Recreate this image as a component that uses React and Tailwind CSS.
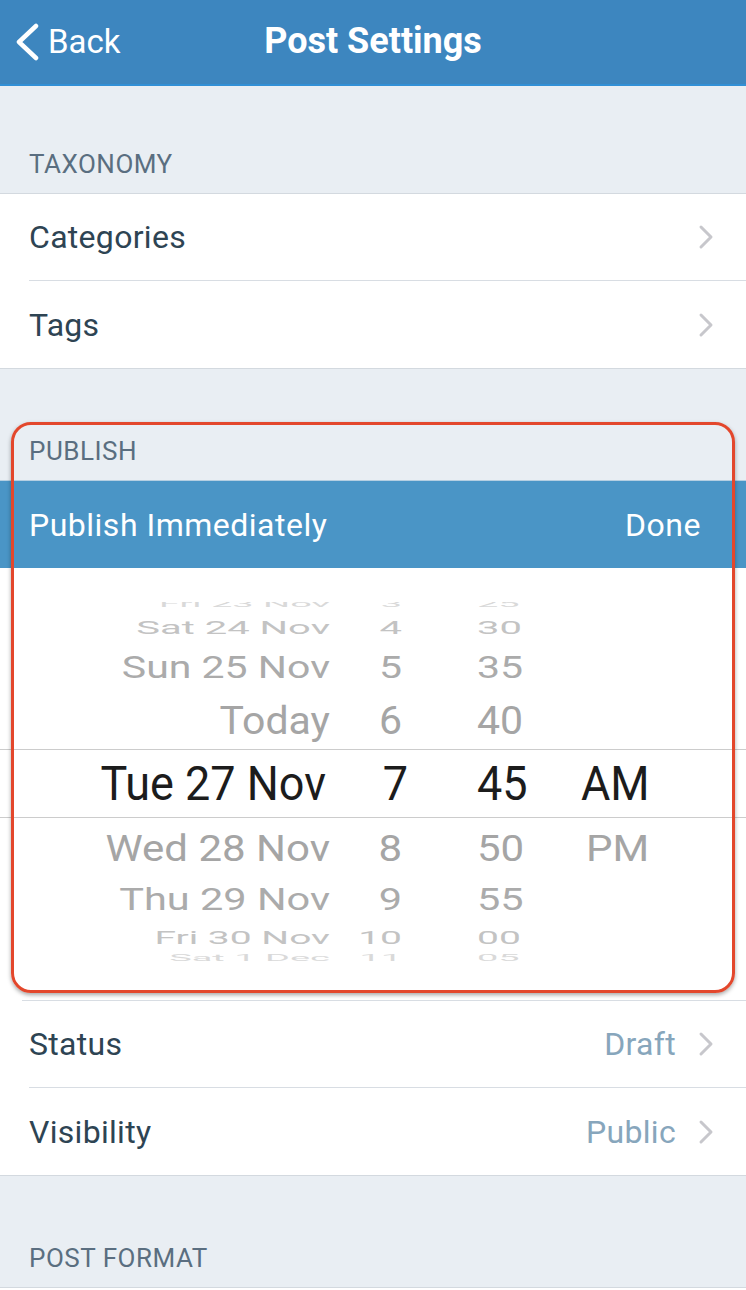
import React from "react";

const Chevron = () => (
  <svg width="16" height="26" viewBox="0 0 16 26" className="shrink-0">
    <polyline points="3,3 13,13 3,23" fill="none" stroke="#c7c7cc" strokeWidth="3" strokeLinecap="round" strokeLinejoin="round" />
  </svg>
);

const Row = ({ label, value, border = true }) => (
  <div className="flex h-[87px] items-center bg-white pl-[29px]">
    <div className={`flex h-full flex-1 items-center pr-[32px] ${border ? "border-b border-[#d8dde3]" : ""}`}>
      <span className="flex-1 text-[32px] tracking-[0.3px] text-[#2e4453]">{label}</span>
      {value && <span className="mr-[22px] text-[32px] tracking-[0.3px] text-[#87a6bc]">{value}</span>}
      <Chevron />
    </div>
  </div>
);

const SectionHeader = ({ title, h }) => (
  <div className={`flex items-end bg-[#e9eef3] pb-[14px] pl-[29px] ${h}`}>
    <span className="text-[26px] leading-[30px] tracking-[0.5px] text-[#5a6e80]">{title}</span>
  </div>
);

const wheel = [
  { d: "Fri 23 Nov", h: "3", m: "25", ap: "", row: "-mt-[9px] h-[22px]", txt: "text-[38px] scale-y-[0.22] text-[#d9d9d9]" },
  { d: "Sat 24 Nov", h: "4", m: "30", ap: "", row: "h-[26px]", txt: "text-[40px] scale-y-[0.47] text-[#c3c3c3]" },
  { d: "Sun 25 Nov", h: "5", m: "35", ap: "", row: "h-[52px]", txt: "text-[41px] scale-y-[0.77] text-[#ababab]" },
  { d: "Today", h: "6", m: "40", ap: "", row: "h-[56px]", txt: "text-[41px] scale-y-[0.93] text-[#a5a5a5]" },
  { d: "Tue 27 Nov", h: "7", m: "45", ap: "AM", row: "h-[69px] border-y border-[#cccccc]", txt: "text-[45px] scale-y-[1.06] text-[#1c1c1c]", sel: true },
  { d: "Wed 28 Nov", h: "8", m: "50", ap: "PM", row: "h-[60px]", txt: "text-[42px] scale-y-[0.9] text-[#a5a5a5]" },
  { d: "Thu 29 Nov", h: "9", m: "55", ap: "", row: "h-[44px]", txt: "text-[41.5px] scale-y-[0.75] text-[#ababab]" },
  { d: "Fri 30 Nov", h: "10", m: "00", ap: "", row: "h-[32px]", txt: "text-[39px] scale-y-[0.46] text-[#c3c3c3]" },
  { d: "Sat 1 Dec", h: "11", m: "05", ap: "", row: "h-[8px]", txt: "text-[38px] scale-y-[0.22] text-[#d9d9d9]" },
];

export default function App() {
  return (
    <div className="relative w-[746px] bg-[#e9eef3]" style={{ fontFamily: "Roboto, 'Liberation Sans', sans-serif" }}>
      {/* Nav bar */}
      <div className="relative flex h-[86px] items-center border-b-2 border-[#3290d6] bg-[#3d86bf]">
        <div className="flex items-center pl-[14px]">
          <svg width="26" height="38" viewBox="0 0 26 38">
            <polyline points="22,3 5,19 22,35" fill="none" stroke="white" strokeWidth="4.5" strokeLinecap="round" strokeLinejoin="round" />
          </svg>
          <span className="ml-[8px] text-[33px] text-white">Back</span>
        </div>
        <div className="pointer-events-none absolute inset-x-0 top-0 flex h-[82px] items-center justify-center">
          <span className="text-[36px] font-bold text-white">Post Settings</span>
        </div>
      </div>

      <SectionHeader title="TAXONOMY" h="h-[107px]" />
      <div className="border-y border-[#d3d9df]">
        <Row label="Categories" />
        <Row label="Tags" border={false} />
      </div>

      <SectionHeader title="PUBLISH" h="h-[111px]" />

      {/* Publish bar */}
      <div className="flex h-[88px] items-center justify-between border-t border-[#b5cfe2] bg-[#4a95c6] pl-[29px] pr-[45px]">
        <span className="text-[32px] tracking-[0.5px] text-white">Publish Immediately</span>
        <span className="text-[32px] tracking-[0.5px] text-white">Done</span>
      </div>

      {/* Picker */}
      <div className="h-[432px] bg-white pt-[34px]">
        <div className="h-[360px] overflow-hidden">
          {wheel.map((r, i) => (
            <div key={i} className={`flex w-full items-center ${r.row}`}>
              <div className={`flex w-full items-center leading-none ${r.txt}`}>
                <span className={`w-[330px] shrink-0 whitespace-nowrap text-right ${r.sel ? "pr-[4px]" : ""}`}>{r.d}</span>
                <span className={`w-[72px] shrink-0 text-right ${r.sel ? "translate-x-[6px]" : ""}`}>{r.h}</span>
                <span className="w-[179px] shrink-0 pl-[75px]">{r.m}</span>
                <span className={r.sel ? "" : "pl-[5px]"}>{r.ap}</span>
              </div>
            </div>
          ))}
        </div>
      </div>

      <div className="border-b border-[#d3d9df] bg-white">
        <div className="ml-[22px] border-t border-[#d8dde3]" />
        <Row label="Status" value="Draft" />
        <Row label="Visibility" value="Public" border={false} />
      </div>

      <SectionHeader title="POST FORMAT" h="h-[111px]" />
      <div className="h-[4px] border-t border-[#d3d9df] bg-white" />

      {/* Annotation highlight */}
      <div className="pointer-events-none absolute left-[11px] top-[422px] h-[571px] w-[724px] rounded-[20px] border-[3px] border-[#e3472c] shadow-[0_2px_4px_rgba(0,0,0,0.35)]" />
    </div>
  );
}
